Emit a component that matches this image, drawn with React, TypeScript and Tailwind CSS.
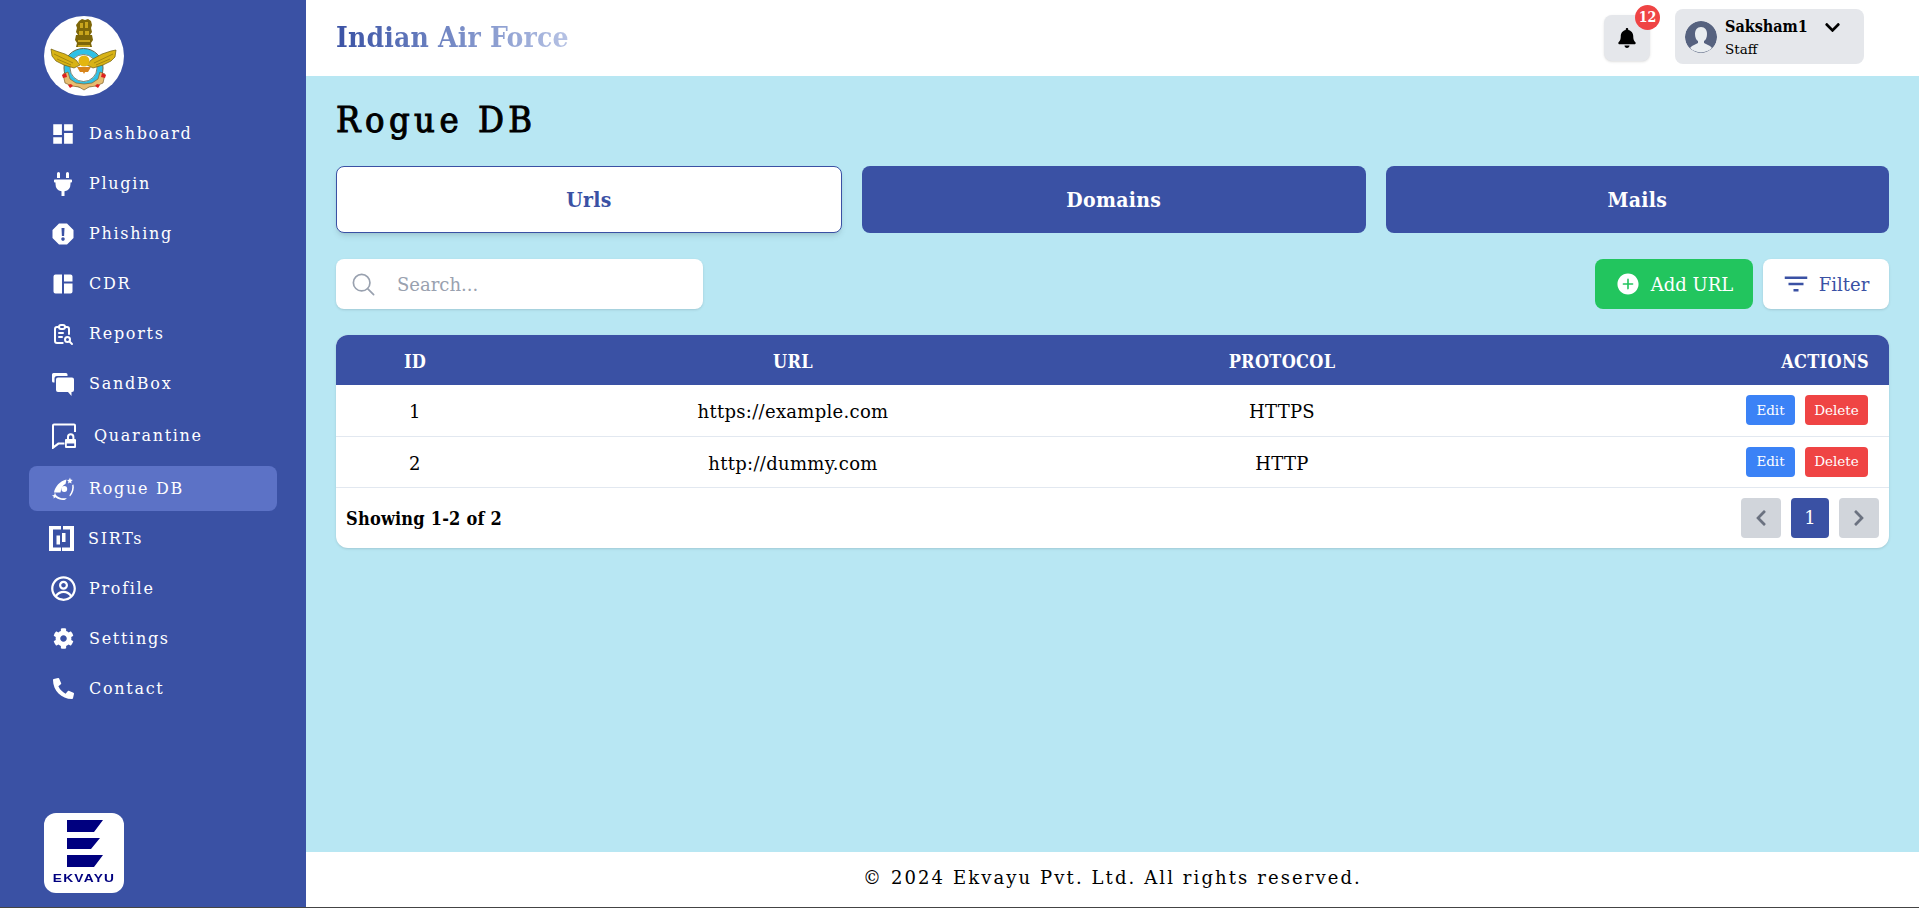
import React from 'react';
import { MdDashboard, MdFilterList } from 'react-icons/md';
import { FaPlug, FaBell, FaChevronDown, FaChevronLeft, FaChevronRight, FaPhoneAlt, FaCog } from 'react-icons/fa';
import { TbReportSearch } from 'react-icons/tb';
import { CgProfile } from 'react-icons/cg';
import { IoSearchOutline } from 'react-icons/io5';
import { IoIosAddCircle } from 'react-icons/io';

// the bold cuts of the serif run wide, so bold text uses the condensed family
const boldSlab = "[font-family:'DejaVu_Serif_Condensed','DejaVu_Serif',serif] font-bold";

const PhishingIcon = () => (
  <svg viewBox="0 0 24 24" className="w-6 h-6" fill="currentColor">
    <path fillRule="evenodd" d="M8 1.500h8l6.500 6.500v8L16 22.500H8L1.500 16V8z M10.500 6h3l-.4 8h-2.200z M12 15.300a1.800 1.800 0 1 0 0 3.600 1.800 1.800 0 0 0 0-3.600z" />
  </svg>
);

const CdrIcon = () => (
  <svg viewBox="0 0 24 24" className="w-6 h-6" fill="currentColor">
    <path d="M2.500 4.500a2 2 0 0 1 2-2h6.500v19H4.500a2 2 0 0 1-2-2z M13 2.500h6.500a2 2 0 0 1 2 2v5H13z M13 11.500h8.500v8a2 2 0 0 1-2 2H13z" />
  </svg>
);

const SandBoxIcon = () => (
  <svg viewBox="0 0 24 24" className="w-6 h-6" fill="currentColor">
    <path d="M1 2.500A1.500 1.500 0 0 1 2.500 1H15a1.500 1.500 0 0 1 1.500 1.500V4H6a2.500 2.500 0 0 0-2.500 2.500V10.500H2.500A1.500 1.500 0 0 1 1 9z" />
    <path d="M7 5.500h14a2 2 0 0 1 2 2V18a2 2 0 0 1-2 2h-.5v4L17 20H7a2 2 0 0 1-2-2V7.500a2 2 0 0 1 2-2z" />
  </svg>
);

const QuarantineIcon = () => (
  <svg viewBox="0 0 26 26" className="w-[26px] h-[26px]" fill="currentColor">
    <path fillRule="evenodd" d="M3 .5h20a2 2 0 0 1 2 2V9h-2V2.500H3v20l4-3h6.500v2H8l-6 4.500H1V2.500a2 2 0 0 1 2-2z" />
    <path fillRule="evenodd" d="M16 16v-2a3.700 3.700 0 0 1 7.400 0v2h.6a1 1 0 0 1 1 1v7a1 1 0 0 1-1 1H15a1 1 0 0 1-1-1v-7a1 1 0 0 1 1-1z M18 16h3.400v-2a1.700 1.700 0 0 0-3.400 0z M15.800 20.500v2.500h7.400v-2.500z" />
  </svg>
);

const RogueIcon = () => (
  <svg viewBox="0 0 24 24" className="w-6 h-6" fill="currentColor">
    <path d="M3 15.500C4 9.500 9 4 15.500 2.500l-1 4.500C12 8 10 11 9.500 15.500z" />
    <circle cx="13.300" cy="12" r="2.900" />
    <path d="M19 .5l.6 2 2.200.5-1.600 1.300.3 2.200-1.700-1.100-1.800 1 .5-2-1.500-1.400 2-.2z" />
    <path d="M22.500 7.500c1 4-.2 8.500-3.500 12l-.6-1.200c2.400-3.300 3.200-6.800 2.800-10.300z" />
    <path d="M1 18.500l2.200-.6.800-2.400.9 2.400c3 3.200 7 4 11 3l-1.800 1.900c-3.600.6-7-.4-9.600-2.600L2.500 21.500l.3-1.800z" />
  </svg>
);

const SirtIcon = () => (
  <svg viewBox="0 0 25 25" className="w-[25px] h-[25px] -ml-[2px]" fill="currentColor">
    <path d="M0 0h12v3.500H4v18h8V25H0z M14 0h11v25H13v-3.500h8V3.500h-7z" />
    <path d="M7.500 9.500h3.500v9H7.500z M13 7h3.500v9H13z" />
  </svg>
);

const Emblem = () => (
  <svg viewBox="0 0 80 80" className="w-20 h-20">
    <circle cx="40" cy="40" r="40" fill="#ffffff" />
    {/* lion capital */}
    <path d="M35 5l3-2 3 1 3-1 3 2 1 4-1 3 1 4-2 3h2l1 5-2 3 1 4H32l1-4-2-3 1-5h2l-2-3 1-4-1-3z" fill="#7d6608" />
    <path d="M36 7h3v5h-3z M41 6h3v6h-3z M35 15h4v4h-4z M41 15h4v4h-4z M34 24h12v2H34z M34 29h12v2H34z" fill="#c9a51d" />
    {/* ring */}
    <circle cx="39.500" cy="52" r="16.500" fill="#ffffff" stroke="#2fc0e6" strokeWidth="5.500" />
    <circle cx="39.500" cy="52" r="19.500" fill="none" stroke="#465238" strokeWidth=".9" />
    <circle cx="39.500" cy="52" r="13.500" fill="none" stroke="#465238" strokeWidth=".7" />
    {/* wings */}
    <path d="M7 33l1 7 4 5 8 4 10 3 6-3-4-5-11-6-9-3z" fill="#d8b316" stroke="#6f5c0c" strokeWidth=".7" />
    <path d="M72 34l-1 7-4 4-8 4-10 3-6-3 4-5 11-6 9-3z" fill="#d8b316" stroke="#6f5c0c" strokeWidth=".7" />
    <path d="M10 38l19 9 M13 43l14 6 M69 38l-19 9 M66 43l-14 6" stroke="#8c7410" strokeWidth=".7" fill="none" />
    <circle cx="40" cy="45" r="5.500" fill="#e4b60f" />
    <path d="M33 51h14l-3 5h-3l-1 2-1-2h-3z" fill="#d8841a" />
    {/* scroll */}
    <path d="M19 58l5-2 2 7 6 4 8 1 8-1 6-4 2-7 5 2-2 9-7 3-7 1-5 3-5-3-7-1-7-3z" fill="#e6bc70" stroke="#80642c" strokeWidth=".7" />
    <path d="M18 59l4-2 1 4-4 1z M58 57l4 2-1 3-4-1z M24 69l3-1 2 2-3 2z M53 68l3 1-2 3-3-2z" fill="#df1f1f" />
  </svg>
);

const EkvayuLogo = () => (
  <div className="w-20 h-20 bg-white rounded-xl flex flex-col items-center">
    <svg viewBox="0 0 80 56" className="w-20 h-14 shrink-0">
      <path d="M23 7h36l-9 12H23z M23 25h33l-9 11H23z M23 42h36l-9 12H23z" fill="#00007f" />
    </svg>
    <span className="text-[11px] leading-none mt-[4px] font-bold tracking-[1px] text-[#00007f] font-['Liberation_Sans',sans-serif] scale-x-125">EKVAYU</span>
  </div>
);

const IconBox = ({ children }: { children: React.ReactNode }) => (
  <span className="w-6 h-6 flex items-center justify-center shrink-0">{children}</span>
);

const navItems = [
  { label: 'Dashboard', icon: <IconBox><MdDashboard size={26} className="shrink-0" /></IconBox> },
  { label: 'Plugin', icon: <IconBox><FaPlug size={24} /></IconBox> },
  { label: 'Phishing', icon: <PhishingIcon /> },
  { label: 'CDR', icon: <CdrIcon /> },
  { label: 'Reports', icon: <IconBox><TbReportSearch size={24} /></IconBox> },
  { label: 'SandBox', icon: <SandBoxIcon /> },
  { label: 'Quarantine', icon: <QuarantineIcon />, tall: true },
  { label: 'Rogue DB', icon: <RogueIcon />, active: true },
  { label: 'SIRTs', icon: <SirtIcon /> },
  { label: 'Profile', icon: <IconBox><CgProfile size={27} className="shrink-0" /></IconBox> },
  { label: 'Settings', icon: <IconBox><FaCog size={21} /></IconBox> },
  { label: 'Contact', icon: <IconBox><FaPhoneAlt size={21} /></IconBox> },
];

const rows = [
  { id: 1, url: 'https://example.com', protocol: 'HTTPS' },
  { id: 2, url: 'http://dummy.com', protocol: 'HTTP' },
];

export default function App() {
  return (
    <div className="h-screen flex border-b border-[#444444] overflow-hidden text-black [font-family:'DejaVu_Serif',serif]">
      <aside className="w-[306px] shrink-0 bg-[#3a51a4] text-white flex flex-col justify-between pt-4 pb-[14px] px-[29px]">
        <div>
          <div className="pl-[15px]"><Emblem /></div>
          <nav className="mt-[15px] flex flex-col gap-[5px]">
            {navItems.map((item) => (
              <div
                key={item.label}
                className={`flex items-center pl-[22px] rounded-lg ${item.tall ? 'h-[50px] gap-[17px]' : 'h-[45px] gap-[14px]'} ${item.active ? 'bg-[#5c72c6]' : ''}`}
              >
                {item.icon}
                <span className="text-base tracking-[1.700px]">{item.label}</span>
              </div>
            ))}
          </nav>
        </div>
        <div className="pl-[15px]"><EkvayuLogo /></div>
      </aside>

      <div className="flex-1 flex flex-col min-w-0">
        <header className="h-[76px] shrink-0 bg-white flex items-center justify-between pl-[30px] pr-[55px]">
          <h1 className={`text-[28px] tracking-[0.2px] bg-linear-to-r from-[#3a51a4] to-[#b6c2e4] bg-clip-text text-transparent ${boldSlab}`}>Indian Air Force</h1>
          <div className="flex items-center gap-[25px] mb-[3px]">
            <div className="relative w-[46px] h-[46px] mt-[2px] bg-[#e5e7eb] rounded-lg shadow-sm flex items-center justify-center">
              <FaBell size={20} />
              <span className={`absolute -top-[10px] -right-[10px] w-[25px] h-[25px] rounded-full bg-[#ef4444] text-white text-sm flex items-center justify-center ${boldSlab}`}>12</span>
            </div>
            <div className="w-[189px] h-[55px] bg-[#e5e7eb] rounded-lg flex items-center pl-[10px]">
              <svg viewBox="0 0 32 32" className="w-8 h-8 rounded-full shrink-0">
                <circle cx="16" cy="16" r="16" fill="#56627f" />
                <path d="M16 6c4 0 6 3 6 7 0 3-1 6-3 7v2l6 3 2 2a16 16 0 0 1-22 0l2-2 6-3v-2c-2-1-3-4-3-7 0-4 2-7 6-7z" fill="#e9edf0" />
              </svg>
              <div className="ml-2 pt-[3px]">
                <div className="flex items-center gap-[16px]">
                  <span className={`text-base leading-5 ${boldSlab}`}>Saksham1</span>
                  <FaChevronDown size={17} />
                </div>
                <div className="text-[13.500px] leading-5 mt-[2px]">Staff</div>
              </div>
            </div>
          </div>
        </header>

        <main className="flex-1 bg-[#b8e7f3] px-[30px] pt-6">
          <h2 className="text-4xl leading-10 tracking-[4.500px] [font-family:'DejaVu_Serif_Condensed','DejaVu_Serif',serif] [-webkit-text-stroke-width:1px]">Rogue DB</h2>

          <div className={`mt-[26px] grid grid-cols-[506px_1fr_1fr] gap-5 text-[21px] tracking-[0.3px] ${boldSlab}`}>
            <button className="h-[67px] bg-white text-[#3a51a4] border border-[#3a51a4] rounded-lg shadow-md">Urls</button>
            <button className="h-[67px] bg-[#3a51a4] text-white rounded-lg">Domains</button>
            <button className="h-[67px] bg-[#3a51a4] text-white rounded-lg">Mails</button>
          </div>

          <div className="mt-[26px] flex items-center justify-between">
            <div className="w-[367px] h-[50px] bg-white rounded-lg shadow-sm flex items-center pl-[14px] text-gray-400">
              <IoSearchOutline size={27} />
              <span className="ml-5 text-lg pt-[2px]">Search...</span>
            </div>
            <div className="flex gap-[10px]">
              <button className="w-[158px] h-[50px] bg-[#22c55e] text-white rounded-lg flex items-center justify-center gap-[10px] text-lg">
                <IoIosAddCircle size={26} />
                <span className="pt-[2px]">Add URL</span>
              </button>
              <button className="w-[126px] h-[50px] bg-white text-[#3a51a4] rounded-lg shadow-sm flex items-center justify-center gap-2 pr-[2px] text-lg">
                <MdFilterList size={30} />
                <span className="pt-[2px]">Filter</span>
              </button>
            </div>
          </div>

          <div className="mt-[26px] bg-white rounded-xl shadow-sm overflow-hidden">
            <table className="w-full table-fixed border-collapse">
              <thead>
                <tr className={`h-[50px] bg-[#3a51a4] text-white text-lg tracking-[0.3px] ${boldSlab}`}>
                  <th className="w-[158px] pt-1">ID</th>
                  <th className="w-[598px] pt-1">URL</th>
                  <th className="w-[380px] pt-1">PROTOCOL</th>
                  <th className="pr-5 pt-1 text-right">ACTIONS</th>
                </tr>
              </thead>
              <tbody>
                {rows.map((row) => (
                  <tr key={row.id} className="h-[51px] border-b border-[#e2e8f0] text-lg tracking-[0.3px] text-center">
                    <td className="pt-1">{row.id}</td>
                    <td className="pt-1">{row.url}</td>
                    <td className="pt-1">{row.protocol}</td>
                    <td className="pr-[21px]">
                      <div className="flex justify-end gap-[10px] tracking-normal">
                        <button className="w-[49px] h-[30px] bg-[#3b82f6] text-white rounded text-[13.500px]">Edit</button>
                        <button className="w-[63px] h-[30px] bg-[#ef4444] text-white rounded text-[13.500px]">Delete</button>
                      </div>
                    </td>
                  </tr>
                ))}
              </tbody>
            </table>
            <div className="h-[60px] flex items-center justify-between px-[10px]">
              <span className={`text-lg tracking-[0.2px] pt-[2px] ${boldSlab}`}>Showing 1-2 of 2</span>
              <div className="flex gap-[10px]">
                <button className="w-10 h-10 bg-[#d1d5db] text-[#6b7280] rounded flex items-center justify-center"><FaChevronLeft size={18} /></button>
                <button className="w-[38px] h-10 bg-[#3a51a4] text-white rounded text-lg">1</button>
                <button className="w-10 h-10 bg-[#d1d5db] text-[#6b7280] rounded flex items-center justify-center"><FaChevronRight size={18} /></button>
              </div>
            </div>
          </div>
        </main>

        <footer className="h-[55px] shrink-0 bg-white flex items-center justify-center pb-1 text-lg tracking-[2.100px]">
          © 2024 Ekvayu Pvt. Ltd. All rights reserved.
        </footer>
      </div>
    </div>
  );
}
